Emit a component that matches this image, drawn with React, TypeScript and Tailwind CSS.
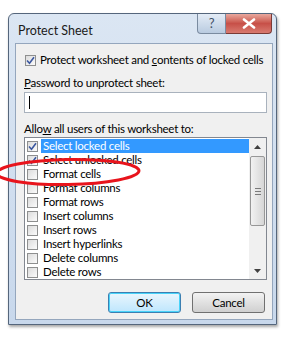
import React from "react";

const font = { fontFamily: 'Lato, "Noto Sans", sans-serif' };

function Check({ checked }: { checked?: boolean }) {
  return (
    <div className="w-[11px] h-[11px] border border-[#8e8f8f] bg-gradient-to-br from-[#dcdcdc] to-[#fbfbfb] flex items-center justify-center shrink-0">
      {checked && (
        <svg width="9" height="9" viewBox="0 0 9 9">
          <path d="M1 4.5 L3.5 7.2 L8 1.2" fill="none" stroke="#3c58a0" strokeWidth="1.6" />
        </svg>
      )}
    </div>
  );
}

const items: [string, boolean][] = [
  ["Select locked cells", true],
  ["Select unlocked cells", true],
  ["Format cells", false],
  ["Format columns", false],
  ["Format rows", false],
  ["Insert columns", false],
  ["Insert rows", false],
  ["Insert hyperlinks", false],
  ["Delete columns", false],
  ["Delete rows", false],
];

export default function App() {
  return (
    <div className="w-[284px] h-[341px] bg-white relative overflow-hidden text-[11.5px] tracking-[-0.25px] text-black whitespace-nowrap" style={font}>
      <div className="ml-[8px] mt-[13px] w-[269px] h-[312px] rounded-t-[6px] border border-[#55667c] bg-gradient-to-b from-[#dbe6f3] to-[#c8d8ec] flex flex-col shadow-[1px_2px_3px_rgba(0,0,0,0.35)]">
        <div className="h-[29px] flex items-start shrink-0">
          <div className="pl-[9px] pt-[8px] text-[12.5px] tracking-normal text-[#1a1a1a]">Protect Sheet</div>
          <div className="ml-auto mr-[4px] flex">
            <div className="w-[29px] h-[20px] rounded-bl-[4px] border border-[#7a8ba0] border-t-0 bg-gradient-to-b from-[#e4ecf6] to-[#b9cbe0] flex items-center justify-center text-[13px] text-[#3f4f66]">?</div>
            <div className="w-[46px] h-[20px] rounded-br-[4px] border border-[#7a3b36] border-t-0 border-l-0 bg-gradient-to-b from-[#e8a89e] via-[#c75048] to-[#d87a70] flex items-center justify-center">
              <svg width="14" height="11" viewBox="0 0 14 11">
                <path d="M2 1.5 L12 9.5 M12 1.5 L2 9.5" stroke="#ffffff" strokeWidth="2.6" strokeLinecap="round" />
              </svg>
            </div>
          </div>
        </div>
        <div className="ml-[6px] mr-[3px] mb-[4px] flex-1 bg-[#f0f0f0] border border-[#94a6bd] flex flex-col pl-[8px] pr-[5px] pt-[9px]">
          <div className="h-[14px] flex items-center gap-[4px] ml-[1px]">
            <Check checked />
            <span>Protect worksheet and <u>c</u>ontents of locked cells</span>
          </div>
          <div className="h-[14px] flex items-center mt-[9px]"><span><u>P</u>assword to unprotect sheet:</span></div>
          <div className="h-[21px] mt-[2px] border border-[#a9b2bd] bg-white flex items-center pl-[4px]">
            <div className="w-[1px] h-[13px] bg-black" />
          </div>
          <div className="h-[14px] flex items-center mt-[9px]"><span>Allo<u>w</u> all users of this worksheet to:</span></div>
          <div className="h-[143px] mt-[1px] border border-[#828790] bg-white flex">
            <div className="flex-1 flex flex-col pt-[1px]">
              {items.map(([t, c], i) => (
                <div key={t} className="h-[14px] flex items-center pl-[2px]">
                  <Check checked={c} />
                  <div className={"ml-[3px] flex-1 h-[14px] flex items-center pl-[2px] " + (i === 0 ? "bg-[#3399ff] text-white" : "")}>{t}</div>
                </div>
              ))}
            </div>
            <div className="w-[17px] bg-[#f0f0f0] flex flex-col items-center">
              <div className="h-[17px] flex items-center justify-center">
                <svg width="7" height="4" viewBox="0 0 7 4"><path d="M0 4 L3.5 0 L7 4Z" fill="#404040" /></svg>
              </div>
              <div className="mt-[1px] w-[15px] h-[70px] rounded-[2px] border border-[#979797] bg-gradient-to-r from-[#f2f2f2] to-[#d6d6d6] flex flex-col items-center justify-center gap-[2px]">
                <div className="w-[6px] h-[1px] bg-[#7a7a7a]" />
                <div className="w-[6px] h-[1px] bg-[#7a7a7a]" />
                <div className="w-[6px] h-[1px] bg-[#7a7a7a]" />
              </div>
              <div className="mt-auto h-[17px] flex items-center justify-center">
                <svg width="7" height="4" viewBox="0 0 7 4"><path d="M0 0 L3.5 4 L7 0Z" fill="#404040" /></svg>
              </div>
            </div>
          </div>
          <div className="flex justify-end gap-[11px] mt-[12px] mr-[2px]">
            <div className="w-[73px] h-[21px] rounded-[3px] border border-[#3c7fb1] bg-gradient-to-b from-[#eaf6fd] to-[#bee6fd] shadow-[inset_0_0_0_1px_#48d3f9] flex items-center justify-center">OK</div>
            <div className="w-[73px] h-[21px] rounded-[3px] border border-[#707070] bg-gradient-to-b from-[#f2f2f2] to-[#d0d0d0] flex items-center justify-center">Cancel</div>
          </div>
        </div>
      </div>
      <svg className="absolute left-0 top-0 pointer-events-none" width="284" height="341">
        <ellipse cx="68" cy="172" rx="71" ry="12.5" fill="none" stroke="#e8141c" strokeWidth="3" transform="rotate(-1 68 172)" />
      </svg>
    </div>
  );
}
